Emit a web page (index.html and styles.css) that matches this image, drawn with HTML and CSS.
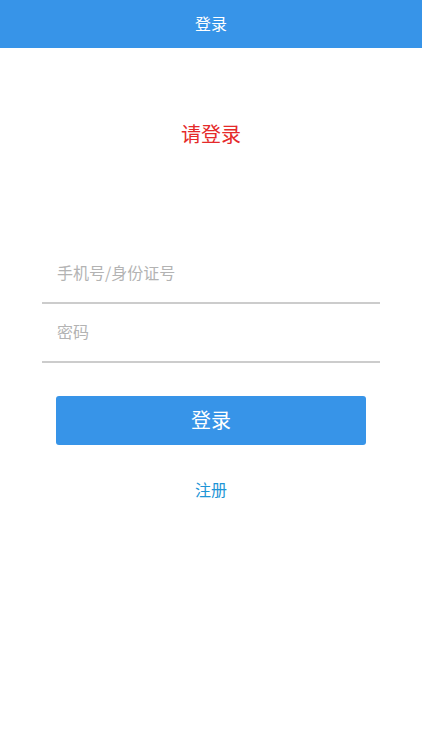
FILE: index.html
```html
<!DOCTYPE html>
<html lang="zh-CN">
<head>
<meta charset="utf-8">
<title>登录</title>
<link rel="stylesheet" href="styles.css">
</head>
<body>
<header class="topbar">登录</header>
<main class="page">
  <h1 class="headline">请登录</h1>
  <form class="form">
    <div class="field"><input class="input" type="text" placeholder="手机号/身份证号"></div>
    <div class="field"><input class="input" type="password" placeholder="密码"></div>
    <button class="submit" type="button">登录</button>
    <a class="register" href="#">注册</a>
  </form>
</main>
</body>
</html>
```
FILE: styles.css
```css
* { box-sizing: border-box; }
html, body { margin: 0; padding: 0; background: #fff; }
body {
  font-family: "Noto Sans CJK SC", "Noto Sans", sans-serif;
  width: 422px;
  min-height: 750px;
}
.topbar {
  height: 48px;
  background: #3794e8;
  color: #fff;
  font-size: 16px;
  line-height: 46px;
  text-align: center;
}
.page {
  display: flex;
  flex-direction: column;
  align-items: center;
}
.headline {
  margin: 72px 0 0;
  height: 28px;
  line-height: 28px;
  font-size: 20px;
  font-weight: normal;
  color: #e52a2a;
}
.form {
  margin-top: 97px;
  width: 338px;
  display: flex;
  flex-direction: column;
  align-items: center;
}
.field {
  width: 100%;
  height: 59px;
  border-bottom: 2px solid #cccccc;
}
.input {
  width: 100%;
  height: 57px;
  border: 0;
  outline: none;
  padding: 0 15px 3px;
  font-family: inherit;
  font-size: 16px;
  color: #333;
  background: transparent;
}
.input::placeholder { color: #b3b3b3; }
.submit {
  margin-top: 33px;
  width: 310px;
  height: 49px;
  border: 0;
  border-radius: 3px;
  background: #3794e8;
  color: #fff;
  font-family: inherit;
  font-size: 20px;
  padding: 0 0 3px;
}
.register {
  margin-top: 33px;
  font-size: 16px;
  line-height: 22px;
  color: #1e95d6;
  text-decoration: none;
}
```
